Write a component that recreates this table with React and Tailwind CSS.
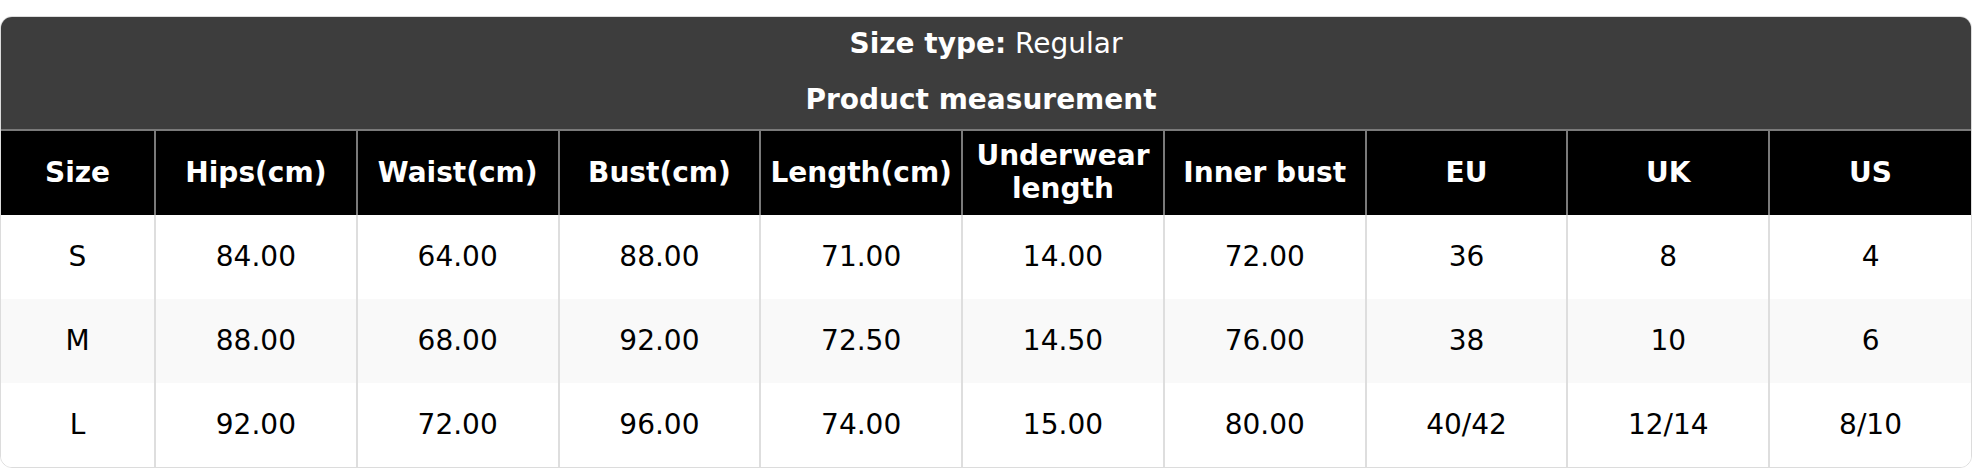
const headers = [
  'Size',
  'Hips(cm)',
  'Waist(cm)',
  'Bust(cm)',
  'Length(cm)',
  'Underwear length',
  'Inner bust',
  'EU',
  'UK',
  'US',
];

const rows = [
  ['S', '84.00', '64.00', '88.00', '71.00', '14.00', '72.00', '36', '8', '4'],
  ['M', '88.00', '68.00', '92.00', '72.50', '14.50', '76.00', '38', '10', '6'],
  ['L', '92.00', '72.00', '96.00', '74.00', '15.00', '80.00', '40/42', '12/14', '8/10'],
];

const App = () => {
  return (
    <div className="pt-[16px] bg-white" style={{ fontFamily: '"DejaVu Sans", sans-serif' }}>
      <div className="rounded-[12px] overflow-hidden border border-[#dcdcdc] bg-white">
        <div className="bg-[#3d3d3d] text-white text-center pt-[11px] pb-[13px]">
          <div className="text-[28px] leading-[32px]">
            <span className="font-bold">Size type:</span> Regular
          </div>
          <div className="text-[28px] leading-[32px] font-bold mt-[24px] pr-[10px]">Product measurement</div>
        </div>
        <table className="w-full border-collapse table-fixed">
          <colgroup>
            <col className="w-[154px]" />
            {headers.slice(1).map((h) => (
              <col key={h} />
            ))}
          </colgroup>
          <thead>
            <tr className="bg-black text-white h-[85px]">
              {headers.map((h, i) => (
                <th
                  key={h}
                  className={`text-[28px] leading-[33px] font-bold px-[6px] pb-[2px] border-t-2 border-t-[#7a7a7a] ${
                    i === 0 ? '' : 'border-l-2 border-l-[#7a7a7a]'
                  }`}
                >
                  {h === 'Underwear length' ? (
                    <>
                      Underwear
                      <br />
                      length
                    </>
                  ) : (
                    h
                  )}
                </th>
              ))}
            </tr>
          </thead>
          <tbody>
            {rows.map((r, ri) => (
              <tr key={ri} className={`h-[84px] ${ri === 1 ? 'bg-[#f9f9f9]' : 'bg-white'}`}>
                {r.map((c, ci) => (
                  <td
                    key={ci}
                    className={`text-center text-[28px] text-black ${
                      ci === 0 ? '' : 'border-l-2 border-l-[#dedede]'
                    }`}
                  >
                    {c}
                  </td>
                ))}
              </tr>
            ))}
          </tbody>
        </table>
      </div>
    </div>
  );
};

export default App;
